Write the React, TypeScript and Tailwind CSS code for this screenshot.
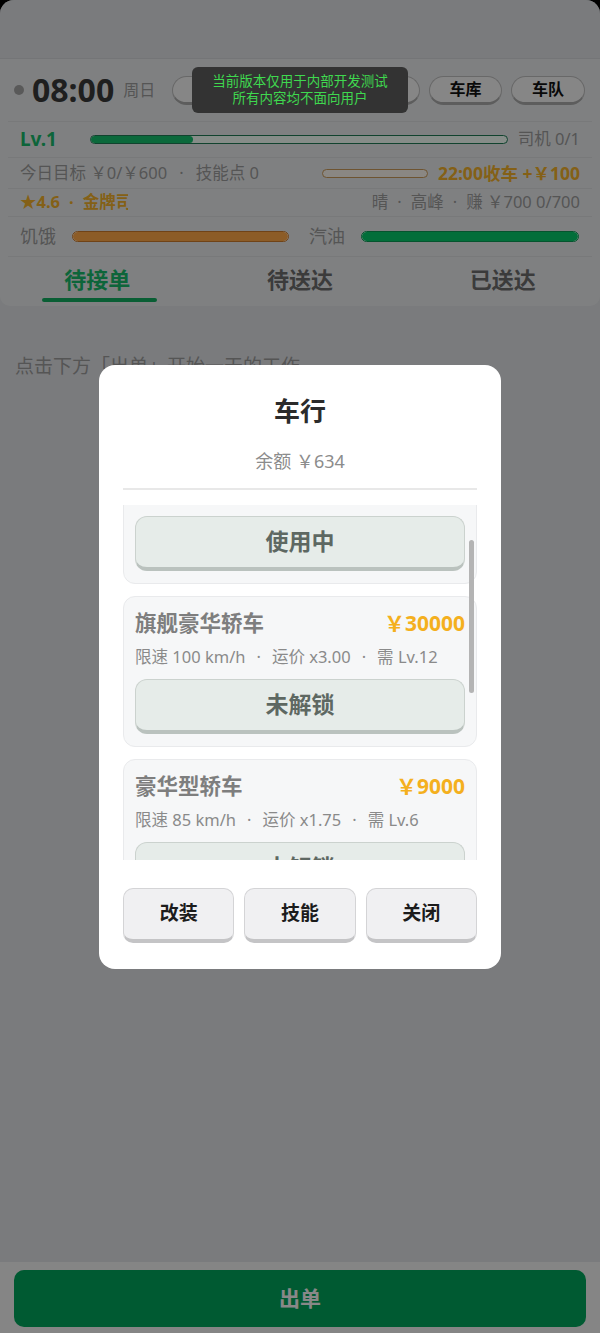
import React from "react";

const font = { fontFamily: '"Noto Sans", "Noto Sans CJK SC", sans-serif' };

function Dot({ m = "mx-[8px]" }: { m?: string }) {
  return <span className={m}>·</span>;
}

function Pill({ children, w }: { children: React.ReactNode; w: string }) {
  return (
    <div
      className={`${w} h-[29px] rounded-full bg-[#f4f4f4] border border-[#bdbdbd] border-b-[3px] border-b-[#a9a9a9] flex items-center justify-center text-[16px] font-bold text-[#111] leading-none`}
    >
      {children}
    </div>
  );
}

function CarCard({
  title,
  price,
  sub,
  action,
}: {
  title: string;
  price: string;
  sub: React.ReactNode;
  action: string;
}) {
  return (
    <div className="shrink-0 rounded-[12px] border border-[#e9eaec] bg-[#f6f7f8] px-[11px] pt-[12px] pb-[12px]">
      <div className="flex items-center justify-between h-[28px]">
        <span className="text-[21.5px] font-bold text-[#7e7e7e] leading-[28px]">{title}</span>
        <span className="text-[21px] font-bold text-[#f4b01e] leading-[28px]">{price}</span>
      </div>
      <div className="mt-[8px] h-[24px] text-[16.5px] leading-[24px] text-[#8a8a8a] whitespace-nowrap">{sub}</div>
      <div className="mt-[10px] h-[55px] rounded-[12px] bg-[#e6ece9] border border-[#cbd2ce] border-b-[4px] border-b-[#bac2be] flex items-center justify-center text-[23px] font-bold text-[#5e6862]">
        {action}
      </div>
    </div>
  );
}

function Bar({ w, fill, pct, border, track, h }: { w: string; fill: string; pct: number; border: string; track: string; h: string }) {
  return (
    <div className={`${w} ${h} rounded-full border-[1.5px] ${border} ${track} overflow-hidden`}>
      <div className={`h-full ${fill} rounded-full`} style={{ width: `${pct}%` }} />
    </div>
  );
}

export default function App() {
  return (
    <div className="w-[600px] h-[1333px] bg-black" style={font}>
      <div className="relative w-full h-full rounded-t-[14px] overflow-hidden bg-[#dee0e3] flex flex-col">
        {/* status area */}
        <div className="h-[58px] shrink-0" />

        {/* header card */}
        <div className="shrink-0 bg-[#e8eaec] rounded-b-[10px] border-t border-[#d4d6d9]">
          {/* row 1 */}
          <div className="h-[62px] flex items-center pl-[14px] pr-[15px]">
            <div className="w-[10px] h-[10px] rounded-full bg-[#a3a3a3]" />
            <span className="ml-[8px] text-[32px] font-bold text-[#3a3a3a] leading-none">08:00</span>
            <span className="ml-[9px] text-[16px] text-[#9b9b9b]">周日</span>
            <div className="ml-auto flex gap-[9px]">
              <Pill w="w-[166px]">看广告加油</Pill>
              <Pill w="w-[73px]">成就</Pill>
              <Pill w="w-[73px]">车库</Pill>
              <Pill w="w-[74px]">车队</Pill>
            </div>
          </div>
          {/* Lv row */}
          <div className="mx-[8px] border-t border-[#dadcdf] h-[36px] flex items-center pl-[12px] pr-[12px]">
            <span className="text-[19px] font-bold text-[#18b86a] w-[70px]">Lv.1</span>
            <Bar w="w-[418px]" h="h-[9px]" fill="bg-[#14bf6c]" pct={24.5} border="border-[#1f7a55]" track="bg-[#f4fff8]" />
            <span className="ml-auto text-[16.5px] text-[#9b9b9b]">司机 0/1</span>
          </div>
          {/* target row */}
          <div className="mx-[8px] border-t border-[#dadcdf] h-[31px] flex items-center pl-[12px] pr-[12px]">
            <span className="text-[16.5px] text-[#9b9b9b] whitespace-nowrap">
              今日目标 ￥0/￥600<Dot m="mx-[12px]" />技能点 0
            </span>
            <div className="ml-auto flex items-center">
              <Bar w="w-[106px]" h="h-[9px]" fill="bg-[#f3c27a]" pct={0} border="border-[#c8995a]" track="bg-[#fbf6ee]" />
              <span className="ml-[10px] text-[17.5px] font-bold text-[#f0b02a] whitespace-nowrap">22:00收车 +￥100</span>
            </div>
          </div>
          {/* rating row */}
          <div className="mx-[8px] border-t border-[#dadcdf] h-[28px] flex items-center pl-[12px] pr-[12px]">
            <div className="w-[108px] overflow-hidden whitespace-nowrap text-[16.5px] font-bold text-[#f0b02a]">
              ★4.6<Dot m="mx-[9px]" />金牌司机
            </div>
            <span className="ml-auto text-[16.5px] text-[#9b9b9b] whitespace-nowrap">
              晴<Dot m="mx-[9px]" />高峰<Dot m="mx-[9px]" />赚 ￥700 0/700
            </span>
          </div>
          {/* hunger / gas */}
          <div className="mx-[8px] border-t border-[#dadcdf] h-[40px] flex items-center pl-[12px] pr-[11px]">
            <span className="text-[18px] text-[#9b9b9b]">饥饿</span>
            <div className="ml-[16px]">
              <Bar w="w-[217px]" h="h-[11px]" fill="bg-[#ffa848]" pct={100} border="border-[#cc7a2a]" track="bg-white" />
            </div>
            <span className="ml-[20px] text-[18px] text-[#9b9b9b]">汽油</span>
            <div className="ml-[16px]">
              <Bar w="w-[218px]" h="h-[11px]" fill="bg-[#05c96b]" pct={100} border="border-[#0a9a55]" track="bg-white" />
            </div>
          </div>
          {/* tabs */}
          <div className="h-[50px] grid grid-cols-3 border-t border-[#dadcdf] mx-[8px]">
            <div className="relative flex justify-center pt-[6px]">
              <span className="text-[22px] leading-[32px] font-bold text-[#18b86a] -translate-x-[8px]">待接单</span>
              <div className="absolute bottom-[4px] left-[34px] w-[115px] h-[4px] rounded-full bg-[#11ab60]" />
            </div>
            <div className="flex justify-center pt-[6px]">
              <span className="text-[22px] leading-[32px] font-bold text-[#6c6c6c]">待送达</span>
            </div>
            <div className="flex justify-center pt-[6px]">
              <span className="text-[22px] leading-[32px] font-bold text-[#6c6c6c] translate-x-[8px]">已送达</span>
            </div>
          </div>
        </div>

        {/* main */}
        <div className="flex-1 px-[15px] pt-[46px]">
          <p className="text-[19px] text-[#9b9b9b]">点击下方「出单」开始一天的工作</p>
        </div>

        {/* footer */}
        <div className="shrink-0 bg-[#f2f2f2] px-[14px] pt-[8px] pb-[6px]">
          <div className="h-[57px] rounded-[10px] bg-[#00a45b] flex items-center justify-center text-[21px] font-bold text-[#f8f8f8]">
            出单
          </div>
        </div>

        {/* overlay + modal */}
        <div className="absolute inset-0 bg-black/[0.45] flex items-center justify-center">
          <div className="w-[402px] h-[604px] bg-white rounded-[16px] px-[24px] pt-[27px] pb-[25px] flex flex-col">
            <div className="text-center text-[26px] font-bold leading-[38px] text-[#2b2b2b]">车行</div>
            <div className="mt-[18px] text-center text-[18px] leading-[26px] text-[#8c8c8c]">余额 ￥634</div>
            <div className="mt-[14px] h-[2px] bg-[#e8e8e8]" />
            <div className="relative mt-[15px] h-[355px] overflow-hidden">
              <div className="-mt-[72px] flex flex-col gap-[12px]">
                <CarCard
                  title="经济型轿车"
                  price="￥0"
                  sub={<>限速 60 km/h<Dot m="mx-[11px]" />运价 x1.00<Dot m="mx-[11px]" />需 Lv.1</>}
                  action="使用中"
                />
                <CarCard
                  title="旗舰豪华轿车"
                  price="￥30000"
                  sub={<>限速 100 km/h<Dot m="mx-[11px]" />运价 x3.00<Dot m="mx-[11px]" />需 Lv.12</>}
                  action="未解锁"
                />
                <CarCard
                  title="豪华型轿车"
                  price="￥9000"
                  sub={<>限速 85 km/h<Dot m="mx-[11px]" />运价 x1.75<Dot m="mx-[11px]" />需 Lv.6</>}
                  action="未解锁"
                />
              </div>
              <div className="absolute right-[3px] top-[35px] w-[5px] h-[153px] rounded-full bg-[#b4b4b4]" />
            </div>
            <div className="mt-[28px] grid grid-cols-3 gap-[10px]">
              {["改装", "技能", "关闭"].map((t) => (
                <div
                  key={t}
                  className="h-[55px] rounded-[10px] bg-[#f0f0f2] border border-[#d4d4d6] border-b-[4px] border-b-[#c4c4c6] flex items-center justify-center text-[19px] font-bold text-[#1c1c1c]"
                >
                  {t}
                </div>
              ))}
            </div>
          </div>
        </div>

        {/* toast */}
        <div className="absolute top-[67px] left-[192px] w-[216px] h-[46px] rounded-[6px] bg-[#333333] flex flex-col items-center justify-center text-[13.5px] leading-[17px] text-[#3fd84f]">
          <span>当前版本仅用于内部开发测试</span>
          <span>所有内容均不面向用户</span>
        </div>
      </div>
    </div>
  );
}
